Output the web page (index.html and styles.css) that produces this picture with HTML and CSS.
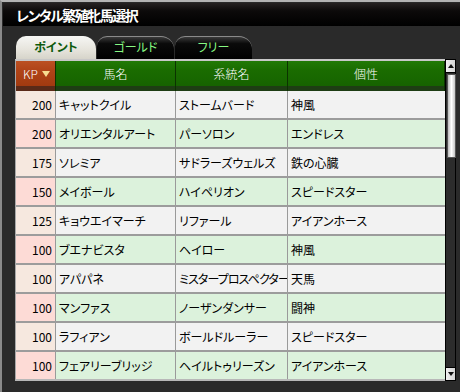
FILE: index.html
```html
<!DOCTYPE html>
<html lang="ja">
<head>
  <meta charset="UTF-8" />
  <title>レンタル繁殖牝馬選択</title>
  <link rel="stylesheet" href="styles.css">
</head>
<body>
  <div class="window">
    <div class="titlebar">
      <h1>レンタル繁殖牝馬選択</h1>
    </div>

    <div class="tabs">
      <div class="tab active">ポイント</div>
      <div class="tab">ゴールド</div>
      <div class="tab">フリー</div>
    </div>

    <div class="panel">
      <div class="list">
        <div class="row head">
          <div class="cell kp">KP<span class="sort"></span></div>
          <div class="cell">馬名</div>
          <div class="cell">系統名</div>
          <div class="cell">個性</div>
        </div>
        <div id="rows"></div>
      </div>

      <div class="scrollbar">
        <div class="sb-btn up"></div>
        <div class="sb-track">
          <div class="sb-thumb"></div>
        </div>
        <div class="sb-btn down"></div>
      </div>
    </div>
  </div>

  <script>
    const horses = [
      [200, "キャットクイル", "ストームバード", "神風"],
      [200, "オリエンタルアート", "パーソロン", "エンドレス"],
      [175, "ソレミア", "サドラーズウェルズ", "鉄の心臓"],
      [150, "メイボール", "ハイペリオン", "スピードスター"],
      [125, "キョウエイマーチ", "リファール", "アイアンホース"],
      [100, "ブエナビスタ", "ヘイロー", "神風"],
      [100, "アパパネ", "ミスタープロスペクター", "天馬"],
      [100, "マンファス", "ノーザンダンサー", "闘神"],
      [100, "ラフィアン", "ボールドルーラー", "スピードスター"],
      [100, "フェアリーブリッジ", "ヘイルトゥリーズン", "アイアンホース"]
    ];

    function cell(text) {
      // long names get squeezed so they fit the column
      const cls = String(text).length > 9 ? "cell long" : "cell";
      return `<div class="${cls}">${text}</div>`;
    }

    const rows = document.getElementById("rows");
    horses.forEach((h, i) => {
      const div = document.createElement("div");
      div.className = "row " + (i % 2 === 0 ? "odd" : "even");
      div.innerHTML = `
        <div class="cell kp">${h[0]}</div>
        ${cell(h[1])}
        ${cell(h[2])}
        ${cell(h[3])}
      `;
      rows.appendChild(div);
    });
  </script>
</body>
</html>
```

FILE: styles.css
```css
html, body {
  margin: 0;
  padding: 0;
}
body {
  width: 460px;
  height: 392px;
  overflow: hidden;
  background: #2a2a2a;
  font-family: "Noto Sans CJK JP", "Noto Sans", sans-serif;
  font-feature-settings: "palt";
}
.window {
  height: 392px;
  box-sizing: border-box;
  border-top: 2px solid #b4b4b4;
  border-left: 2px solid #8a8a8a;
  padding: 1px 0 0 1px;
}
.titlebar {
  height: 23px;
  background: linear-gradient(to bottom, #262222 0%, #0c0a0a 35%, #000 100%);
  display: flex;
  align-items: center;
  padding-left: 13px;
}
.titlebar h1 {
  margin: 0;
  color: white;
  font-size: 14px;
  font-weight: bold;
  letter-spacing: -1.5px;
  line-height: 1;
}
.tabs {
  display: flex;
  height: 23px;
  margin: 10px 0 0 13px;
  gap: 1px;
}
.tab {
  width: 77px;
  box-sizing: border-box;
  border-radius: 10px 13px 0 0;
  display: flex;
  justify-content: center;
  align-items: center;
  padding-bottom: 3px;
  font-size: 12px;
  color: #86f882;
  background: linear-gradient(to bottom, #3a3a3a 0%, #0a0a0a 30%, #000 100%);
  border-top: 1px solid #8a8a8a;
}
.tab.active {
  width: 80px;
  color: #0d5a0d;
  font-weight: bold;
  border-top: none;
  background: linear-gradient(to bottom, #f6f6f4 0%, #e6e4dc 60%, #d6d4ca 100%);
}
.panel {
  display: flex;
  margin-left: 12px;
  width: 441px;
}
.list {
  width: 429px;
  border-top: 2px solid #c8c8c8;
  border-bottom: 2px solid #b8b8b8;
  border-left: 1px solid #a8a8a8;
}
.row {
  display: grid;
  grid-template-columns: 40px 120px 112px 157px;
  height: 29px;
  box-sizing: border-box;
  border-bottom: 2px solid #9c9c9c;
  font-size: 12px;
  color: #000;
}
.row:last-child {
  border-bottom: none;
  height: 27px;
}
.cell {
  box-sizing: border-box;
  border-right: 1px solid #9a9a9a;
  padding-left: 3px;
  display: flex;
  align-items: center;
  white-space: nowrap;
  overflow: hidden;
}
.cell.long {
  letter-spacing: -0.9px;
}
.cell:last-child {
  border-right: none;
}
.cell.kp {
  justify-content: flex-end;
  padding: 0 3px 0 0;
}
.odd .cell {
  background: #f2f2f2;
}
.odd .cell.kp {
  background: #f6e8df;
}
.even .cell {
  background: #dcf2dc;
}
.even .cell.kp {
  background: #fddbd6;
}
.row.head {
  height: 30px;
  border-bottom: none;
  color: white;
}
.head .cell {
  justify-content: center;
  padding: 0 0 5px 0;
  font-weight: 300;
  border-right: 1px solid #0b3300;
  background: linear-gradient(to bottom, #217a06 0%, #1a6c00 30%, #166300 83%, #1e3d14 83%, #1e3d14 100%);
}
.head .cell.kp {
  justify-content: center;
  padding: 0 0 5px 2px;
  border-right: 1px solid #0b3300;
  background: linear-gradient(to bottom, #bb5022 0%, #b04418 30%, #a23a10 83%, #5a2a18 83%, #5a2a18 100%);
}
.sort {
  display: inline-block;
  margin-left: 4px;
  border-left: 4px solid transparent;
  border-right: 4px solid transparent;
  border-top: 6px solid #f7dc90;
}
.scrollbar {
  width: 11px;
  box-sizing: border-box;
  border: 1px solid #000;
  background: #2c2c2c;
  display: flex;
  flex-direction: column;
}
.sb-btn {
  height: 12px;
  background: linear-gradient(to right, #f0f0f0, #d4d4d4);
  border-bottom: 1px solid #000;
  position: relative;
}
.sb-btn.down {
  border-bottom: none;
  border-top: 1px solid #000;
}
.sb-btn::after {
  content: "";
  position: absolute;
  left: 2px;
  top: 4px;
  border-left: 3px solid transparent;
  border-right: 3px solid transparent;
  border-bottom: 4px solid #111;
}
.sb-btn.down::after {
  border-bottom: none;
  border-top: 4px solid #111;
}
.sb-track {
  flex: 1;
  padding: 1px 0 0 1px;
}
.sb-thumb {
  width: 7px;
  height: 82px;
  border: 1px solid #555;
  background: linear-gradient(to right, #bdbdbd, #ffffff 50%, #c4c4c4);
}
```
